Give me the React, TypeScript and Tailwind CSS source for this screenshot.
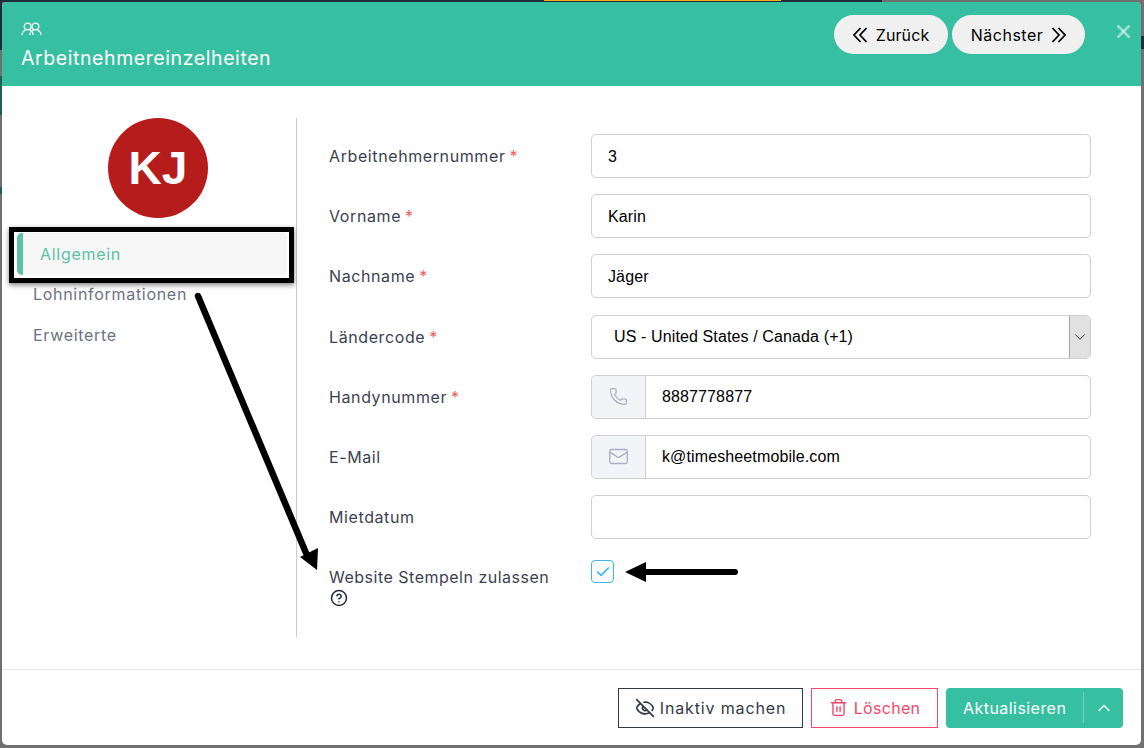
import React from "react";
import { Check, ChevronDown, ChevronUp, CircleHelp, EyeOff, Mail, Phone, Trash2, X } from "lucide-react";

const PeopleIcon = () => (
  <svg width="21" height="14" viewBox="0 0 21 14" fill="none" stroke="white" strokeWidth="1.3">
    <circle cx="6.6" cy="4.5" r="3.4" />
    <circle cx="14.4" cy="4.5" r="3.4" />
    <path d="M1 13c.3-2.6 1.6-4.3 3.7-5M8.5 8c2.1.7 3.4 2.4 3.7 5" />
    <path d="M8.8 13c.3-2.6 1.6-4.3 3.7-5M16.3 8c2.1.7 3.4 2.4 3.7 5" />
  </svg>
);

const DoubleChevron = ({ flip }: { flip?: boolean }) => (
  <svg
    width="14"
    height="16"
    viewBox="0 0 14 16"
    fill="none"
    stroke="currentColor"
    strokeWidth="1.7"
    className={flip ? "rotate-180" : ""}
  >
    <path d="M7.5 1L1 8l6.5 7" />
    <path d="M13.5 1L7 8l6.5 7" />
  </svg>
);

const Field = ({
  label,
  required,
  children,
}: {
  label: string;
  required?: boolean;
  children: React.ReactNode;
}) => (
  <div className="flex h-[60.2px] items-start">
    <label className="flex h-[44px] w-[262px] shrink-0 items-center text-[16px] tracking-[0.6px] text-[#3b4252]">
      {label}
      {required && <span className="ml-1 text-[#ee5f5b]">*</span>}
    </label>
    {children}
  </div>
);

const inputBox =
  "flex h-[44px] w-[500px] items-center rounded-[5px] border border-[#cfcfcf] bg-white font-['Liberation_Sans',sans-serif] text-[16px] tracking-[0.12px] text-black";

const TextField = ({ value }: { value?: string }) => (
  <div className={`${inputBox} px-4 pt-px`}>{value}</div>
);

const IconField = ({ icon, value }: { icon: React.ReactNode; value: string }) => (
  <div className={inputBox}>
    <div className="flex h-[42px] w-[54px] shrink-0 items-center justify-center rounded-l-[5px] border-r border-[#cfcfcf] bg-[#f3f4f8] text-[#adadc2]">
      {icon}
    </div>
    <span className="pl-4 pt-px">{value}</span>
  </div>
);

export default function App() {
  return (
    <div className="relative h-[748px] w-[1144px] overflow-hidden bg-[#707070] pl-[2px] pt-[2px] font-['Inter',sans-serif]">
      {/* what shows of the page behind the dialog */}
      <div className="absolute left-0 top-0 h-[2px] w-[882px] bg-[#1f2d3a]" />
      <div className="absolute left-[544px] top-0 h-[1px] w-[237px] bg-[#f5b324]" />
      <div className="absolute left-0 top-0 h-[50px] w-[2px] bg-[#1f2d3a]" />
      <div className="absolute left-0 top-[76px] h-[39px] w-[2px] bg-[#1f5f56]" />
      <div className="absolute left-0 top-[187px] h-[7px] w-[2px] bg-[#1f5f56]" />
      <div className="absolute right-0 top-[36px] h-[13px] w-[3px] bg-[#1f2d3a]" />

      <div className="flex h-[743px] w-[1139px] flex-col overflow-hidden rounded-[5px] bg-white">
        <header className="flex h-[84px] shrink-0 justify-between bg-[#36bfa1] pl-[19px] pr-[7px]">
          <div className="pt-[20px]">
            <PeopleIcon />
            <h1 className="mt-[8px] text-[19.5px] leading-[28px] tracking-[0.58px] text-white">
              Arbeitnehmereinzelheiten
            </h1>
          </div>
          <div className="flex items-start pt-[13px]">
            <div className="flex gap-1 text-[16px] text-black">
              <button className="flex h-[39px] w-[114px] items-center justify-center gap-[9px] rounded-full bg-[#f0f0f0] tracking-[0.1px]">
                <DoubleChevron />
                Zurück
              </button>
              <button className="flex h-[39px] w-[133px] items-center justify-center gap-[9px] rounded-full bg-[#f0f0f0] tracking-[0.5px]">
                Nächster
                <DoubleChevron flip />
              </button>
            </div>
            <X size={21} strokeWidth={3} className="ml-[28px] mt-[6px] text-white/50" />
          </div>
        </header>

        <div className="flex flex-1 pt-[32px]">
          <aside className="h-[519px] w-[295px] shrink-0 border-r border-[#cccccc] pl-[15px] pr-[9px]">
            <div className="ml-[91px] flex h-[100px] w-[100px] items-center justify-center rounded-full bg-[#b71c1c] font-['Liberation_Sans',sans-serif] text-[46px] font-bold text-white">
              KJ
            </div>
            <nav className="mt-[15px] text-[16px] tracking-[0.7px]">
              <div className="flex h-[42px] items-center rounded-[5px] border-l-[6px] border-[#5cc2a3] bg-[#f6f6f6] pl-[17px] text-[#5cc2a3]">
                Allgemein
              </div>
              <div className="mt-[8px] pl-[16px] leading-[22px] text-[#6c7283]">Lohninformationen</div>
              <div className="mt-[19px] pl-[16px] leading-[22px] text-[#6c7283]">Erweiterte</div>
            </nav>
          </aside>

          <div className="flex-1 pl-[32px] pt-[16px]">
            <Field label="Arbeitnehmernummer" required>
              <TextField value="3" />
            </Field>
            <Field label="Vorname" required>
              <TextField value="Karin" />
            </Field>
            <Field label="Nachname" required>
              <TextField value="Jäger" />
            </Field>
            <Field label="Ländercode" required>
              <div className={`${inputBox} justify-between overflow-hidden pl-[22px]`}>
                <span className="pt-px">US - United States / Canada (+1)</span>
                <div className="flex h-[42px] w-[21px] items-center justify-center border-l border-[#a8a8a8] bg-[#e1e1e1] text-[#333]">
                  <ChevronDown size={18} strokeWidth={1.25} />
                </div>
              </div>
            </Field>
            <Field label="Handynummer" required>
              <IconField icon={<Phone size={19} strokeWidth={1.5} />} value="8887778877" />
            </Field>
            <Field label="E-Mail">
              <IconField icon={<Mail size={21} strokeWidth={1.5} />} value="k@timesheetmobile.com" />
            </Field>
            <Field label="Mietdatum">
              <TextField />
            </Field>
            <div className="flex pt-[5px]">
              <div className="w-[262px] shrink-0 pt-[6px] text-[16px] leading-[22px] tracking-[0.5px] text-[#3b4252]">
                <div>Website Stempeln zulassen</div>
                <CircleHelp size={18} strokeWidth={2} className="ml-px mt-[1px] text-[#222b3a]" />
              </div>
              <div className="flex h-[23px] w-[23px] items-center justify-center rounded-[4px] border border-[#38b6f1] text-[#38b6f1]">
                <Check size={16} strokeWidth={2.5} />
              </div>
            </div>
          </div>
        </div>

        <footer className="flex h-[76px] shrink-0 items-start justify-end gap-2 border-t border-[#e8e8e8] pr-[18px] pt-[18px] text-[16px]">
          <button className="flex h-[40px] w-[185px] items-center justify-center gap-[5px] border border-[#333a45] pb-px tracking-[0.85px] text-[#333a45]">
            <EyeOff size={20} strokeWidth={2} />
            Inaktiv machen
          </button>
          <button className="flex h-[40px] w-[127px] items-center justify-center gap-1.5 border border-[#f4476b] pb-px tracking-[0.3px] text-[#f4476b]">
            <Trash2 size={19} strokeWidth={1.75} />
            Löschen
          </button>
          <button className="flex h-[40px] w-[177px] items-center rounded-[4px] bg-[#36bfa1] pb-px pl-[17px] tracking-[0.45px] text-white">
            <span className="w-[120px] text-left">Aktualisieren</span>
            <span className="flex h-[31px] flex-1 items-center justify-center border-l border-white/30">
              <ChevronUp size={20} strokeWidth={1.5} />
            </span>
          </button>
        </footer>
      </div>

      {/* annotation drawn over the screenshot */}
      <div className="absolute left-[9px] top-[227px] h-[56px] w-[285px] border-[5px] border-black shadow-[0_2px_5px_rgba(0,0,0,0.5)]" />
      <svg className="pointer-events-none absolute left-0 top-0" width="1144" height="748" fill="none">
        <path d="M198 296L306 553" stroke="black" strokeWidth="6.5" strokeLinecap="round" />
        <path d="M317 570L300 557L318 548Z" fill="black" />
        <path d="M644 572H735" stroke="black" strokeWidth="6" strokeLinecap="round" />
        <path d="M625 572L646 562V582Z" fill="black" />
      </svg>
    </div>
  );
}
